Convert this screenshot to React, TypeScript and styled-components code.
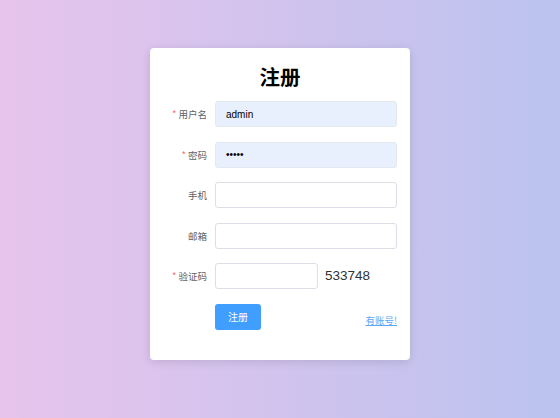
import React from "react";
import styled, { createGlobalStyle } from "styled-components";

const Global = createGlobalStyle`
  html, body { margin: 0; padding: 0; }
  body {
    font-family: "Liberation Sans", "Noto Sans CJK SC", sans-serif;
  }
  * { box-sizing: border-box; }
`;

const Page = styled.div`
  width: 560px;
  height: 418px;
  background: linear-gradient(to right, #e7c4ec, #bbc3ef);
  display: flex;
  justify-content: center;
  align-items: flex-start;
  padding-top: 48px;
`;

const Card = styled.div`
  width: 260px;
  background: #fff;
  border-radius: 4px;
  box-shadow: 0 2px 10px rgba(0, 0, 0, 0.12);
  padding: 13px 13px 30px 0;
  display: flex;
  flex-direction: column;
`;

const Title = styled.h1`
  margin: 0 0 10px 0;
  padding-left: 13px;
  height: 30px;
  line-height: 30px;
  text-align: center;
  font-size: 20.5px;
  font-weight: bold;
  color: #000;
  font-family: "Noto Sans CJK SC", sans-serif;
`;

const Row = styled.div<{ $last?: boolean }>`
  display: flex;
  align-items: center;
  height: 26px;
  margin-bottom: ${(p) => (p.$last ? 0 : "14.5px")};
`;

const Label = styled.label`
  width: 65px;
  flex: none;
  padding-right: 8px;
  text-align: right;
  font-size: 9.5px;
  color: #606266;
  font-family: "Noto Sans CJK SC", sans-serif;
`;

const Star = styled.span`
  color: #f56c6c;
  margin-right: 2px;
`;

const Input = styled.input<{ $filled?: boolean; $w?: number }>`
  width: ${(p) => (p.$w ? `${p.$w}px` : "182px")};
  height: 26px;
  border: 1px solid ${(p) => (p.$filled ? "#e4e8f0" : "#dcdfe6")};
  border-radius: 3px;
  background: ${(p) => (p.$filled ? "#e8f0fe" : "#fff")};
  padding: 0 10px;
  font-size: 10px;
  color: #000;
  font-family: "Liberation Sans", sans-serif;
  outline: none;
`;

const Code = styled.span`
  margin-left: 7px;
  font-size: 13.5px;
  color: #303133;
  font-family: "Liberation Sans", sans-serif;
  margin-bottom: 2px;
`;

const ActionRow = styled.div`
  display: flex;
  align-items: flex-end;
  justify-content: space-between;
  padding-left: 65px;
  height: 26px;
`;

const Button = styled.button`
  width: 46px;
  height: 26px;
  border: none;
  border-radius: 3px;
  background: #409eff;
  color: #fff;
  font-size: 10px;
  font-family: "Noto Sans CJK SC", sans-serif;
  padding: 0;
`;

const Link = styled.a`
  font-size: 9.5px;
  color: #5aa6f8;
  text-decoration: underline;
  font-family: "Noto Sans CJK SC", sans-serif;
  line-height: 14px;
  margin-bottom: 3px;
`;

export default function App() {
  return (
    <>
      <Global />
      <Page>
        <Card>
          <Title>注册</Title>
          <Row>
            <Label>
              <Star>*</Star>用户名
            </Label>
            <Input $filled defaultValue="admin" />
          </Row>
          <Row>
            <Label>
              <Star>*</Star>密码
            </Label>
            <Input $filled type="password" defaultValue="12345" />
          </Row>
          <Row>
            <Label>手机</Label>
            <Input />
          </Row>
          <Row>
            <Label>邮箱</Label>
            <Input />
          </Row>
          <Row>
            <Label>
              <Star>*</Star>验证码
            </Label>
            <Input $w={103} />
            <Code>533748</Code>
          </Row>
          <ActionRow>
            <Button>注册</Button>
            <Link href="#">有账号!</Link>
          </ActionRow>
        </Card>
      </Page>
    </>
  );
}
